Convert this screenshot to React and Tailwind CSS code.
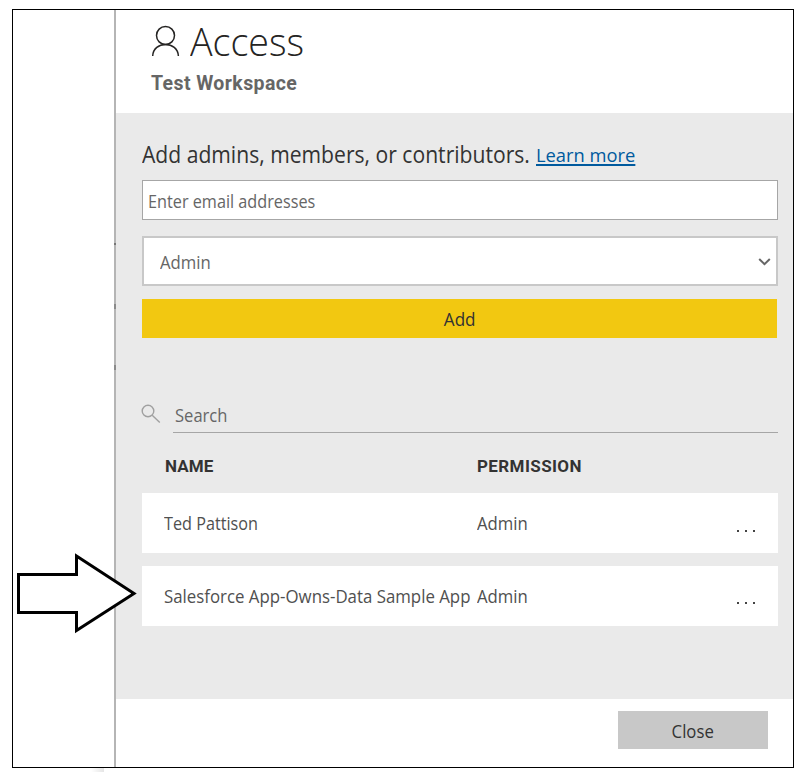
const members = [
  { name: "Ted Pattison", permission: "Admin", fit: "scale-x-[0.9]", dots: "mt-[15px]" },
  { name: "Salesforce App-Owns-Data Sample App", permission: "Admin", fit: "scale-x-[0.935]", dots: "mt-[13px]" },
];

function Dots({ offset }) {
  return (
    <span className={`ml-auto mr-[23px] flex w-[18px] justify-between ${offset}`} aria-label="More options">
      <i className="size-[2px] bg-[#444]" />
      <i className="size-[2px] bg-[#444]" />
      <i className="size-[2px] bg-[#444]" />
    </span>
  );
}

function MemberRow({ name, permission, fit, dots }) {
  return (
    <div className="flex h-[60px] w-[636px] items-center bg-white pl-[22px] text-[18px] leading-6 text-[#505050]">
      <div className="w-[313px] shrink-0 whitespace-nowrap">
        <span className={`inline-block origin-left ${fit}`}>{name}</span>
      </div>
      <span className="inline-block origin-left scale-x-[0.93]">{permission}</span>
      <Dots offset={dots} />
    </div>
  );
}

export default function App() {
  return (
    <div className="relative h-[777px] w-[808px] overflow-hidden bg-white pl-3 pt-[9px] font-['Open_Sans','Noto_Sans',sans-serif]">
      <div className="flex h-[759px] w-[782px] border border-black">
        <div className="w-[101px] shrink-0" />
        <main className="relative flex flex-1 flex-col border-l-2 border-[#b5b5b5]">
          <i className="absolute -left-[2px] top-[233px] h-[2px] w-[2px] bg-[#777]" />
          <i className="absolute -left-[2px] top-[294px] h-[5px] w-[2px] bg-[#8a8a8a]" />
          <i className="absolute -left-[2px] top-[355px] h-[5px] w-[2px] bg-[#8a8a8a]" />
          <header className="h-[103px] shrink-0 pl-[35px] pt-[8px]">
            <div className="flex h-[46px] items-center">
              <svg className="h-[32px] w-[29px] shrink-0" viewBox="0 0 29 32" fill="none" stroke="#252423" strokeWidth="1.5">
                <circle cx="14.5" cy="10.5" r="9" />
                <path d="M1.7 31C2 23.5 8 19.4 14.5 19.4S27 23.5 27.4 31" />
              </svg>
              <h1 className="ml-[10px] origin-left scale-x-[0.965] whitespace-nowrap text-[39px] font-light leading-[46px] text-[#252423]">Access</h1>
            </div>
            <h2 className="mt-[7px] origin-left whitespace-nowrap font-[Roboto] text-[19.5px] font-bold leading-[26px] tracking-[0.4px] text-[#666]">Test Workspace</h2>
          </header>
          <section className="h-[586px] shrink-0 bg-[#eaeaea] pl-[26px]">
            <div className="flex h-[67px] items-start pt-[26px]">
              <p className="w-[394px] shrink-0 whitespace-nowrap text-[#333]">
                <span className="inline-block origin-left scale-x-[0.918] text-[23px] leading-[30px]">Add admins, members, or contributors.</span>
              </p>
              <a className="mt-[1px] inline-block origin-left scale-x-[0.965] whitespace-nowrap text-[19px] leading-[30px] text-[#005a9e] underline decoration-2 underline-offset-2">Learn more</a>
            </div>
            <div className="flex h-[40px] w-[636px] items-center border border-[#a6a6a6] bg-white pl-[5px] pt-[2px] text-[18px] text-[#666]">
              <span className="origin-left scale-x-[0.902]">Enter email addresses</span>
            </div>
            <div className="mt-[16px] flex h-[50px] w-[636px] items-center justify-between border-2 border-[#c8c8c8] bg-white pl-[16px] pr-[5px] text-[18px] text-[#666]">
              <span className="origin-left scale-x-[0.93] pt-[2px]">Admin</span>
              <svg className="mt-[1px] h-[8px] w-[13px]" viewBox="0 0 13 8" fill="none" stroke="#666" strokeWidth="2">
                <path d="M1.2 1L6.5 6.2L11.8 1" />
              </svg>
            </div>
            <button className="mt-[13px] flex h-[39px] w-[635px] items-center justify-center bg-[#f2c811] pt-[2px] text-[18px] text-[#333]">
              <span className="scale-x-[0.95]">Add</span>
            </button>
            <div className="mt-[60px] flex h-[35px] w-[636px] items-start">
              <svg className="-ml-px mt-[6px] h-[20px] w-[20px]" viewBox="0 0 20 20" fill="none" stroke="#a0a0a0" strokeWidth="1.4">
                <circle cx="7" cy="7" r="5.8" />
                <path d="M11.2 11.2L18.8 18.5" />
              </svg>
              <div className="ml-[12px] flex h-full flex-1 items-center border-b border-[#a6a6a6] pl-[2px] text-[18px] text-[#666]">
                <span className="origin-left scale-x-[0.92]">Search</span>
              </div>
            </div>
            <div className="flex h-[60px] items-center pl-[23px] pt-[7px] font-[Roboto] text-[17px] font-bold text-[#333]">
              <span className="w-[312px] shrink-0 tracking-[0.1px]">NAME</span>
              <span className="tracking-[0.4px]">PERMISSION</span>
            </div>
            <div className="flex flex-col gap-[13px]">
              {members.map((m) => (
                <MemberRow key={m.name} {...m} />
              ))}
            </div>
          </section>
          <footer className="flex flex-1 justify-end pr-[25px] pt-[12px]">
            <button className="flex h-[38px] w-[150px] items-center justify-center bg-[#c8c8c8] pt-[2px] text-[18px] text-[#333]">
              <span className="scale-x-[0.93]">Close</span>
            </button>
          </footer>
        </main>
      </div>
      <i className="absolute left-[91px] top-[768px] h-[4px] w-[13px] bg-linear-to-r from-white to-[#e5e5e5]" />
      <svg className="absolute left-[14px] top-[550px] h-[86px] w-[126px]" viewBox="0 0 126 86" fill="white" stroke="black" strokeWidth="3">
        <path d="M4.5 24.5H62.5V6L120 43.5L62.5 80.5V62.5H4.5Z" />
      </svg>
    </div>
  );
}
